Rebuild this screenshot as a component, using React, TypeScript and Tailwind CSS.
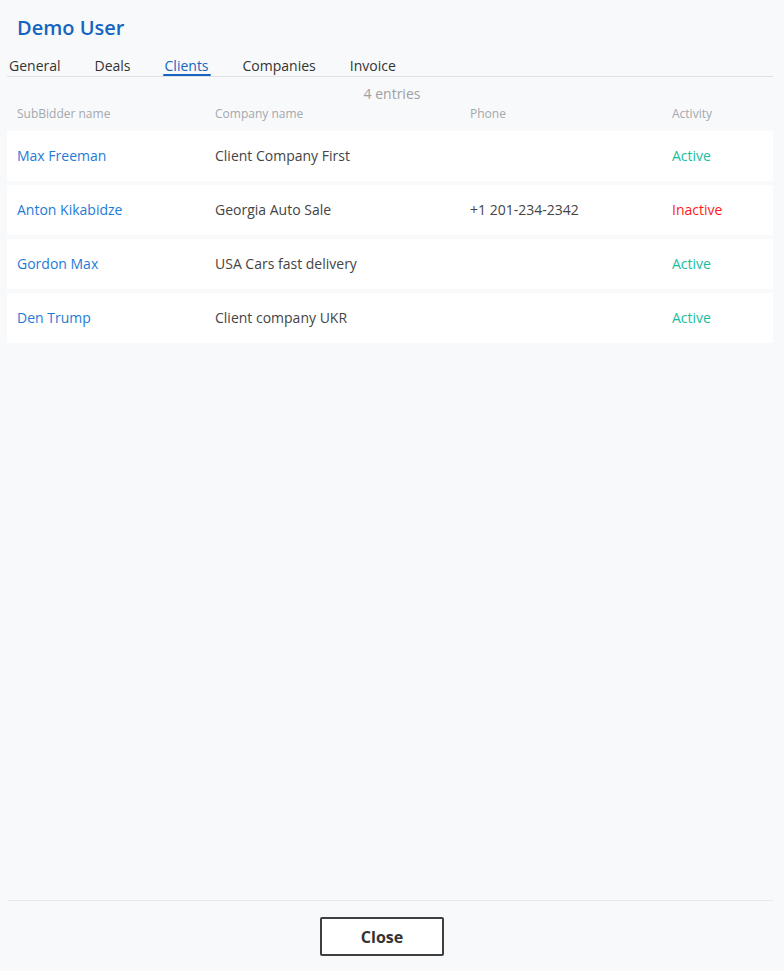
import React from "react";

const tabs = ["General", "Deals", "Clients", "Companies", "Invoice"];

const rows = [
  { name: "Max Freeman", company: "Client Company First", phone: "", active: true },
  { name: "Anton Kikabidze", company: "Georgia Auto Sale", phone: "+1 201-234-2342", active: false },
  { name: "Gordon Max", company: "USA Cars fast delivery", phone: "", active: true },
  { name: "Den Trump", company: "Client company UKR", phone: "", active: true },
];

export default function App() {
  return (
    <div
      className="h-[971px] w-full bg-[#f8f9fb] flex flex-col text-[#444]"
      style={{ fontFamily: '"Open Sans", "Noto Sans", sans-serif' }}
    >
      <div className="px-[7px]">
        <h1 className="pt-[14px] pl-[10px] text-[20px] leading-[28px] font-semibold text-[#1565c0]">
          Demo User
        </h1>
        <div className="mt-[15px] mr-[4px] flex gap-[30px] border-b border-[#dfe3e8]">
          {tabs.map((t) => (
            <div
              key={t}
              className={
                "relative px-[2px] pb-[2px] text-[14px] leading-[17px] " +
                (t === "Clients" ? "text-[#1565c0]" : "text-[#333]")
              }
            >
              {t}
              {t === "Clients" && (
                <span className="absolute left-0 right-0 bottom-0 h-[2px] rounded-full bg-[#1565c0]" />
              )}
            </div>
          ))}
        </div>
        <div className="mt-[7px] text-center text-[14px] leading-[19px] text-[#a0a0a0]">4 entries</div>
        <div className="mt-[3px] grid grid-cols-[198px_255px_202px_1fr] pl-[10px] text-[12px] leading-[16px] text-[#a3a8ad]">
          <div>SubBidder name</div>
          <div>Company name</div>
          <div>Phone</div>
          <div>Activity</div>
        </div>
        <div className="mt-[9px] flex flex-col gap-[4px] mr-[4px]">
          {rows.map((r) => (
            <div
              key={r.name}
              className="h-[50px] bg-white grid grid-cols-[198px_255px_202px_1fr] items-center pl-[10px] pb-[2px] text-[14px]"
            >
              <div className="text-[#1e7bd6]">{r.name}</div>
              <div className="text-[#444]">{r.company}</div>
              <div className="text-[#444]">{r.phone}</div>
              <div className={r.active ? "text-[#1abc9c]" : "text-[#ff1a1a]"}>
                {r.active ? "Active" : "Inactive"}
              </div>
            </div>
          ))}
        </div>
      </div>
      <div className="flex-1" />
      <div className="mx-[8px] mr-[11px] border-t border-[#e6e9ed] pt-[16px] pb-[15px] flex justify-center">
        <button className="mr-[17px] h-[39px] w-[124px] bg-white border-2 border-[#3f3f3f] rounded-[2px] text-[16px] font-bold text-[#333]">
          Close
        </button>
      </div>
    </div>
  );
}
